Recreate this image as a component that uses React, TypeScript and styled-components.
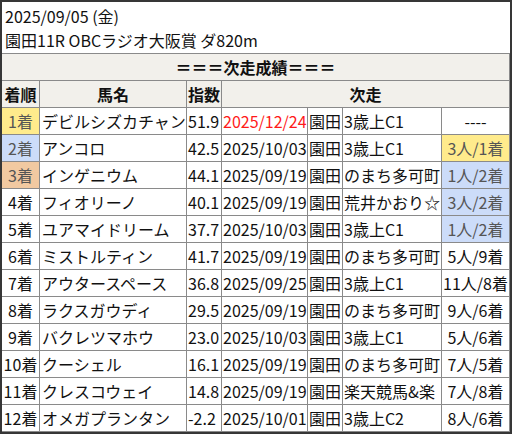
import React from 'react';
import styled, { createGlobalStyle } from 'styled-components';

const GlobalStyle = createGlobalStyle`
  html, body {
    margin: 0;
    padding: 0;
    background: #ffffff;
  }
`;

const Frame = styled.div`
  width: 512px;
  height: 434px;
  box-sizing: border-box;
  border: 2px solid #363636;
  background: #ffffff;
  font-family: "Noto Sans CJK JP", "Noto Sans", sans-serif;
  font-size: 16px;
  color: #111111;
  overflow: hidden;
`;

const RaceInfo = styled.div`
  height: 51px;
  box-sizing: border-box;
  padding: 2px 0 0 3px;
`;

const InfoLine = styled.div`
  height: 24px;
  line-height: 24px;
  white-space: nowrap;
`;

const Grid = styled.div`
  display: grid;
  grid-template-columns: 37px 147px 35px 86px 35px 99px 68px;
  grid-auto-rows: 27px;
  border-right: 1px solid #8a8a8a;
  border-bottom: 1px solid #8a8a8a;
`;

const Cell = styled.div<{ $align?: string; $bg?: string; $color?: string; $first?: boolean; $pad?: number }>`
  box-sizing: border-box;
  border-top: 1px solid #8a8a8a;
  border-left: ${(p) => (p.$first ? 'none' : '1px solid #8a8a8a')};
  background: ${(p) => p.$bg || '#ffffff'};
  color: ${(p) => p.$color || '#111111'};
  text-align: ${(p) => p.$align || 'left'};
  padding: 0 ${(p) => p.$pad ?? 1}px;
  line-height: 26px;
  white-space: nowrap;
  overflow: hidden;
`;

const TitleCell = styled(Cell)`
  grid-column: 1 / -1;
  background: #f2f0eb;
  font-weight: 700;
  text-align: center;
`;

const HeadCell = styled(Cell)<{ $span?: number }>`
  grid-column: span ${(p) => p.$span || 1};
  background: #f2f0eb;
  font-weight: 700;
  text-align: center;
`;

const YELLOW = '#ffeb8c';
const BLUE = '#ccdcf9';
const TAN = '#f1c9a1';
const MUTED = '#555555';

type Row = {
  rank: number;
  name: string;
  score: string;
  date: string;
  venue: string;
  race: string;
  result: string;
  resultBg?: string;
  red?: boolean;
};

const rows: Row[] = [
  { rank: 1, name: 'デビルシズカチャン', score: '51.9', date: '2025/12/24', venue: '園田', race: '3歳上C1', result: '----', red: true },
  { rank: 2, name: 'アンコロ', score: '42.5', date: '2025/10/03', venue: '園田', race: '3歳上C1', result: '3人/1着', resultBg: YELLOW },
  { rank: 3, name: 'インゲニウム', score: '44.1', date: '2025/09/19', venue: '園田', race: 'のまち多可町', result: '1人/2着', resultBg: BLUE },
  { rank: 4, name: 'フィオリーノ', score: '40.1', date: '2025/09/19', venue: '園田', race: '荒井かおり☆', result: '3人/2着', resultBg: BLUE },
  { rank: 5, name: 'ユアマイドリーム', score: '37.7', date: '2025/10/03', venue: '園田', race: '3歳上C1', result: '1人/2着', resultBg: BLUE },
  { rank: 6, name: 'ミストルティン', score: '41.7', date: '2025/09/19', venue: '園田', race: 'のまち多可町', result: '5人/9着' },
  { rank: 7, name: 'アウタースペース', score: '36.8', date: '2025/09/25', venue: '園田', race: '3歳上C1', result: '11人/8着' },
  { rank: 8, name: 'ラクスガウディ', score: '29.5', date: '2025/09/19', venue: '園田', race: 'のまち多可町', result: '9人/6着' },
  { rank: 9, name: 'バクレツマホウ', score: '23.0', date: '2025/10/03', venue: '園田', race: '3歳上C1', result: '5人/6着' },
  { rank: 10, name: 'クーシェル', score: '16.1', date: '2025/09/19', venue: '園田', race: 'のまち多可町', result: '7人/5着' },
  { rank: 11, name: 'クレスコウェイ', score: '14.8', date: '2025/09/19', venue: '園田', race: '楽天競馬&楽', result: '7人/8着' },
  { rank: 12, name: 'オメガプランタン', score: '-2.2', date: '2025/10/01', venue: '園田', race: '3歳上C2', result: '8人/6着' },
];

const rankBg: Record<number, string> = { 1: YELLOW, 2: BLUE, 3: TAN };

const App: React.FC = () => {
  return (
    <Frame>
      <GlobalStyle />
      <RaceInfo>
        <InfoLine>2025/09/05 (金)</InfoLine>
        <InfoLine>園田11R OBCラジオ大阪賞 ダ820m</InfoLine>
      </RaceInfo>

      <Grid>
        <TitleCell $first>＝＝＝次走成績＝＝＝</TitleCell>

        <HeadCell $first>着順</HeadCell>
        <HeadCell>馬名</HeadCell>
        <HeadCell>指数</HeadCell>
        <HeadCell $span={4}>次走</HeadCell>

        {rows.map((r) => (
          <React.Fragment key={r.rank}>
            <Cell $first $align="center" $pad={0} $bg={rankBg[r.rank]} $color={rankBg[r.rank] ? MUTED : undefined}>
              {r.rank}着
            </Cell>
            <Cell $pad={2}>{r.name}</Cell>
            <Cell>{r.score}</Cell>
            <Cell $color={r.red ? '#ff1a1a' : undefined}>{r.date}</Cell>
            <Cell>{r.venue}</Cell>
            <Cell>{r.race}</Cell>
            <Cell $align="center" $pad={0} $bg={r.resultBg} $color={r.resultBg ? MUTED : undefined}>
              {r.result}
            </Cell>
          </React.Fragment>
        ))}
      </Grid>
    </Frame>
  );
};

export default App;
